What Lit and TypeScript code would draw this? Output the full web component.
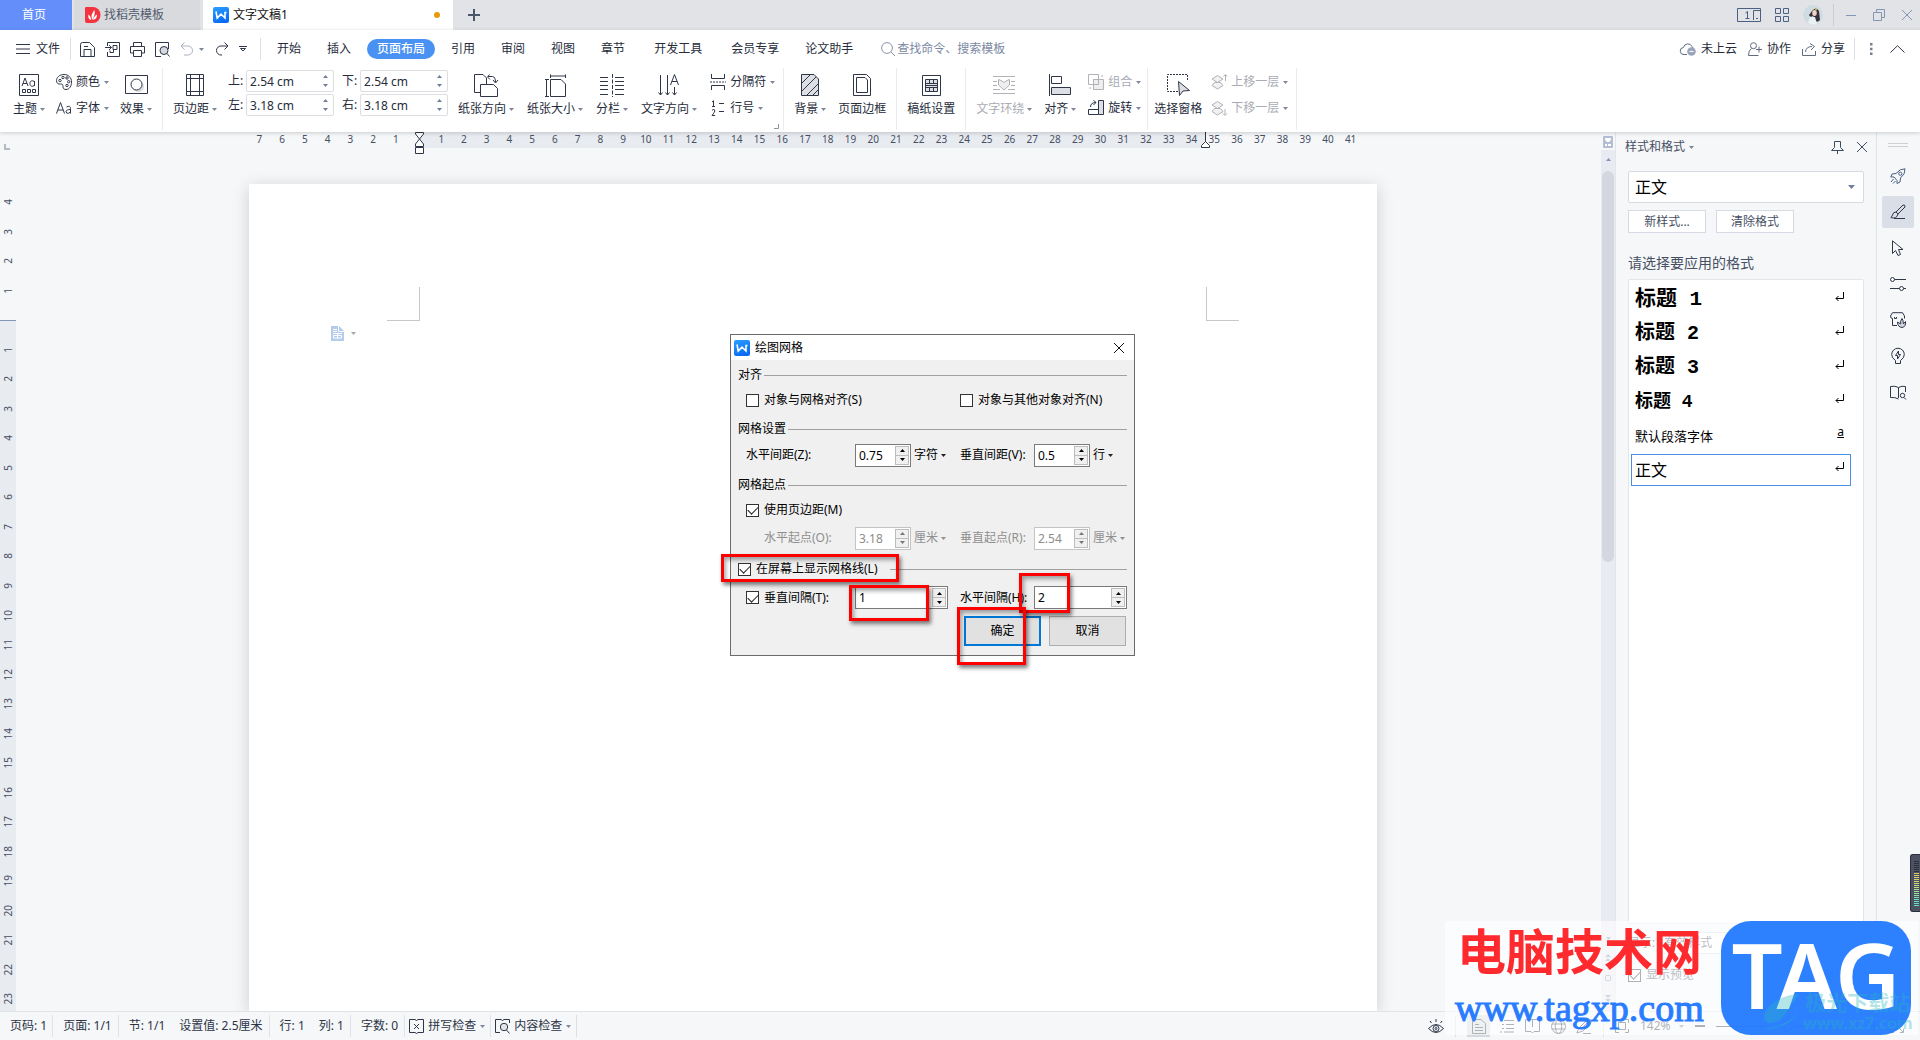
import { LitElement, html, svg, css, nothing } from "lit";
import { customElement } from "lit/decorators.js";
import { classMap } from "lit/directives/class-map.js";

/** Wraps vector content in an <svg> drawn at one unit per pixel. */
const ic = (w: number, h: number, body: unknown, cls = "") =>
  html`<svg class="ic ${cls}" width=${w} height=${h} viewBox="0 0 ${w} ${h}" aria-hidden="true">${body}</svg>`;

const caret = () => ic(5, 3, svg`<path d="M0 0H5L2.5 3Z" fill="currentColor" stroke="none"/>`, "caret");
const up = () => ic(5, 3, svg`<path d="M0 3H5L2.5 0Z" fill="currentColor" stroke="none"/>`);
const down = () => ic(5, 3, svg`<path d="M0 0H5L2.5 3Z" fill="currentColor" stroke="none"/>`);

const wps = () => ic(16, 16, svg`
  <defs><linearGradient id="wg" x1="0" y1="0" x2="0.4" y2="1"><stop offset="0" stop-color="#2ba0ff"/><stop offset="1" stop-color="#0a6cf5"/></linearGradient></defs>
  <rect width="16" height="16" rx="2" fill="url(#wg)" stroke="none"/>
  <path d="M3 4.500L4.200 11L8 7.200L12 11V5.500H13.500" fill="none" stroke="#fff" stroke-width="1.600"/>`);

const icons = {
  docer: ic(15, 16, svg`<path d="M1 0H8A7.500 8 0 0 1 8 16H2Q0 16 0 14V1Q0 0 1 0Z" fill="#f5333f" stroke="none"/><path d="M5.500 13Q2.500 11 3.500 7.500Q6 9 6 13ZM7 13Q5.500 7 9.500 3Q10.500 8 7 13ZM8 13Q8.500 9.500 12 7.500Q12 12 8 13Z" fill="#fff" stroke="none"/>`),
  plus: ic(12, 12, svg`<path d="M6 0V12M0 6H12" stroke="#4b566c" stroke-width="2"/>`),
  layout: ic(24, 14, svg`<path d="M15 .5H.5V13.500H15M15 .5H23.500V13.500H15M16.500 12V2.500H23M19 10.500H21" stroke="#4a5f82"/><path d="M10.500 11V3.500L8.500 5M8.500 10.500H12.500" stroke="#4a5f82"/>`),
  grid: ic(14, 14, svg`<path d="M.5.5H5.500V5.500H.5ZM8.500.5H13.500V5.500H8.500ZM.5 8.500H5.500V13.500H.5ZM8.500 8.500H13.500V13.500H8.500Z" stroke="#4a5f82"/>`),
  avatar: ic(20, 20, svg`<g stroke="none"><circle cx="10" cy="10" r="10" fill="#cfdde2"/><path d="M9 6Q13 1 16 6L17 15Q13 19 12 14L10 11Q7 13 6 10Z" fill="#35303c"/><ellipse cx="11.500" cy="8" rx="2.300" ry="3" fill="#f1d3c5"/><path d="M7 12L12 12L14 19Q9 21 5 18Z" fill="#e9f1f4"/><circle cx="13" cy="4.500" r="1" fill="#e6b34a"/></g>`),
  min: ic(10, 12, svg`<path d="M0 6.500H10" stroke="#8494b3"/>`),
  restore: ic(12, 12, svg`<path d="M.5 3.500H8.500V11.500H.5ZM3.500 3V.5H11.500V8.500H9" stroke="#8494b3"/>`),
  close: ic(10, 10, svg`<path d="M0 0L10 10M10 0L0 10" stroke="#8494b3"/>`),
  menu: ic(14, 10, svg`<path d="M0 .5H14M0 5H14M0 9.500H14"/>`),
  save: ic(15, 15, svg`<path d="M.5 2.500Q.5.5 2.500.5H9.500L14.500 5.500V14.500H.5ZM4 14V7.500H11V14M4 4.500H8"/>`),
  pdf: ic(15, 15, svg`<path d="M2.500 4V.5H14.500V14.500H2.500V10M0 5.500H6.500M4 3L6.500 5.500L4 8M8 3.500H12V7.500H8ZM8.500 7.500V10.500H5V8.500"/>`),
  print: ic(15, 15, svg`<path d="M3.500 4V.5H11.500V4M3.500 11H.5V4.500H14.500V11H11.500M3.500 8.500H11.500V14.500H3.500Z"/>`),
  preview: ic(15, 15, svg`<path d="M6 14.500H.5V.5H13.500V7"/><circle cx="9" cy="8.500" r="4" fill="#d6d9e2"/><path d="M12 11.500L14.500 14.500"/>`),
  undo: ic(13, 14, svg`<path d="M4.500.5L1 4L4.500 7.500M1 4H8A4.500 4.500 0 0 1 8 13H4" stroke="#aab0bd"/>`),
  redo: ic(13, 14, svg`<path d="M8.500.5L12 4L8.500 7.500M12 4H5A4.500 4.500 0 0 0 5 13H6"/>`),
  more: ic(8, 6, svg`<path d="M0 .5H8M1.500 2.500L4 5L6.500 2.500Z"/>`),
  search: ic(14, 14, svg`<circle cx="6" cy="6" r="5.400" stroke="#8793ac"/><path d="M10 10L14 14" stroke="#8793ac"/>`),
  cloud: ic(16, 14, svg`<path d="M7 12.500H4A3.500 3.500 0 0 1 3.500 5.500A4.500 4.500 0 0 1 12 4.500L13 6" stroke="#606b80"/><circle cx="11.500" cy="9.500" r="4.300" fill="#9aa5ba" stroke="none"/><path d="M9.500 9.500H13.500" stroke="#fff"/>`),
  person: ic(14, 14, svg`<circle cx="5.500" cy="3.700" r="3" stroke="#606b80"/><path d="M3.500 6.500Q.5 8 .5 13.500H10.500M8 7.500H14M11 4.500V10.500" stroke="#606b80"/>`),
  share: ic(14, 13, svg`<path d="M.5 6V12.500H13.500V8M3.500 9Q4 3.500 10 3.500M8 .5L12.500 3.500L9 7" stroke="#606b80"/>`),
  dots: ic(3, 12, svg`<path d="M0 0H2.500V2.500H0ZM0 4.700H2.500V7.200H0ZM0 9.400H2.500V11.900H0Z" fill="#777f90" stroke="none"/>`),
  chevron: ic(15, 8, svg`<path d="M.5 7.500L7.500.7L14.500 7.500"/>`),
  theme: ic(20, 22, svg`<path d="M.5.5H19.500V21.500H.5ZM3.500 15.500H6.500V18.500H3.500ZM8.500 15.500H11.500V18.500H8.500ZM13.500 15.500H16.500V18.500H13.500Z"/><path d="M3 12L6 4L9 12M4 9.500H8M15.500 7V12M15.500 9.500A2.300 2.300 0 1 0 11 9.500A2.300 2.300 0 1 0 15.500 9.500"/>`),
  palette: ic(16, 16, svg`<path d="M8 .5C3.500.5.5 3.500.5 6.500C.5 9 2 10.500 4.500 10C6.500 9.600 7 11 7 12.500C7 14.500 8 15.500 10 15.500C13.500 15.500 15.500 12 15.500 8C15.500 3.500 12.500.5 8 .5Z"/><circle cx="4" cy="6.500" r="1.200"/><circle cx="7" cy="3.500" r="1.200"/><circle cx="11" cy="4" r="1.200"/><circle cx="12.700" cy="7.700" r="1.200"/><circle cx="11" cy="11.500" r="1.200"/>`),
  aa: ic(16, 14, svg`<path d="M.5 12.500L4.500 1.500L8.500 12.500M2 9H7M10.500 6Q14.500 4 14.500 7.500V12.500M14.500 8.500Q10 8.500 10 10.700Q10.500 12.800 12.500 12.300L14.500 11"/>`),
  effect: ic(23, 20, svg`<path d="M.5.5H22.500V18.500H.5Z"/><circle cx="13.500" cy="11.500" r="5.500" fill="#dcdde2" stroke="none"/><circle cx="11.500" cy="9.500" r="5.500" fill="#fff"/>`),
  margins: ic(18, 22, svg`<path d="M.5.5H17.500V21.500H.5ZM4.500.5V21.500M13.500.5V21.500M.5 4.500H17.500M.5 17.500H17.500"/>`),
  orient: ic(24, 23, svg`<path d="M6 18.500H.5V.5H9L12.500 4V10M6.500 22.500V10.500H19.500L23.500 14.500V22.500ZM15.500.5L13.500 3L16 5.500M14 2.500H18.500Q21.500 3 21.500 8M19 6L21.500 9L24 6"/>`),
  size: ic(21, 23, svg`<path d="M5.500.5V4M20.500.5V4M5.500 2H20.500M0 5.500H4M0 22.500H4M1.500 5.500V22.500M5.500 5.500H16L20.500 10V22.500H5.500Z"/>`),
  columns: ic(24, 23, svg`<path d="M0 3.500H8M0 7.500H8M0 11.500H8M0 15.500H8M0 20.500H8M15 3.500H24M15 7.500H24M15 11.500H24M15 15.500H24M15 20.500H24"/><path d="M12.500 0V23" stroke-dasharray="4 1.500"/>`),
  textdir: ic(22, 23, svg`<path d="M2.500 1V21M9.500 1V21M16.500 13V21M.5 18.500L2.500 21L4.500 18.500M7.500 18.500L9.500 21L11.500 18.500M14.500 18.500L16.500 21L18.500 18.500M12.500 11L16.500.5L20.500 11M14 7.500H19"/>`),
  breaks: ic(16, 16, svg`<path d="M1.500 0V4.500H14.500V0M1.500 16V11.500H14.500V16"/><path d="M0 8H16" stroke-dasharray="2 1"/>`),
  lines: ic(16, 16, svg`<path d="M2 2L3.500.8V6.500M2 6.500H5M2 10.200Q4.800 8.500 4.800 11Q4.500 12.500 2 15.500H5.200M9 3.500H14M9 11.500H14"/>`),
  backdrop: ic(18, 22, svg`<path d="M.5.5H13L17.500 5V21.500H.5Z" fill="#dddfe5"/><path d="M1 9L9 1M1 17L15 3M6 21L17 10M12 21L17 16"/>`),
  border: ic(18, 22, svg`<path d="M.5.5H13.500L17.500 4.500V21.500H.5ZM3.500 3.500H12L14.500 6V18.500H3.500Z"/>`),
  manuscript: ic(19, 21, svg`<path d="M.5.5H18.500V20.500H.5Z"/><path d="M3.500 4.500H15.500V16.500H3.500Z" fill="#dddfe5"/><path d="M3.500 8.500H15.500M3.500 12.500H15.500M7.500 4.500V8.500M11.500 4.500V8.500M7.500 12.500V16.500M11.500 12.500V16.500M3.500 10.500H15.500"/>`),
  wrap: ic(22, 18, svg`<path d="M0 .5H22M0 17.500H22M0 5.500H4M0 9.500H4M0 13.500H7M18 5.500H22M18 9.500H22M15 13.500H22" stroke="#b0b2b8"/><path d="M11 14L5.500 9V3.500L8 4.500L11 6.500L14 4.500L16.500 3.500V9Z" fill="#eee" stroke="#b0b2b8"/>`),
  align: ic(22, 22, svg`<path d="M.5 0V22M2.500 2.500H12.500V9.500H2.500Z"/><path d="M2.500 13.500H21.500V20.500H2.500Z" fill="#dddfe5"/>`),
  group: ic(16, 16, svg`<path d="M.5.5H10.500V10.500H.5Z" stroke="#b0b2b8"/><path d="M5.500 5.500H15.500V15.500H5.500Z" fill="#eee" stroke="#b0b2b8"/><path d="M5.500 5.500H10.500V10.500H5.500ZM13 2H15M1 14H3" stroke="#b0b2b8"/>`),
  rotate: ic(16, 16, svg`<path d="M10.500.5H15.500V14.500H10.500Z" fill="#dddfe5"/><path d="M10.500 9.500H.5V14.500H10.500M2.500 7Q2.500 2.500 8 2.500M5.500.3L8 2.500L5.500 5"/>`),
  pane: ic(23, 22, svg`<path d="M11 17.500H.5V.5H20.500V7" stroke-dasharray="2 1"/><path d="M11.500 7.500L22.500 16.500L16 17L12.500 21.500Z" fill="#dddfe5"/>`),
  raise: ic(16, 16, svg`<path d="M6.500 1.500L12 5L6.500 8.500L1 5ZM6.500 15L12 11.500L9.500 8.500L6.500 8.500L3.500 8.500L1 11.500Z" fill="#f1f1f2" stroke="#b0b2b8"/><path d="M14.500 7V1M12.500 2.500L14.500.5L16 2.500" stroke="#b0b2b8"/>`),
  lower: ic(16, 16, svg`<path d="M6.500 15L12 11.500L9.500 8.500L3.500 8.500L1 11.500ZM6.500 1.500L12 5L6.500 8.500L1 5Z" fill="#f1f1f2" stroke="#b0b2b8"/><path d="M14 9V15M12 13.500L14 15.500L16 13.500" stroke="#b0b2b8"/>`),
  launcher: ic(5, 5, svg`<path d="M4.500 0V4.500H0" stroke="#8b93a5"/>`),
  doc: ic(13, 15, svg`<path d="M0 0H8L13 5V15H0Z" fill="#b4cbec" stroke="none"/><path d="M7.500 0V5.500H13M2 3.500H6M2 5.500H6M2 7.500H11M2.500 9.500H10.500V12H2.500ZM6.500 8V13" stroke="#fff"/>`),
  pin: ic(13, 13, svg`<path d="M3.500.5H9.500V6.500L12.500 9.500H.5L3.500 6.500ZM6.500 9.500V13" stroke="#3d4a63"/>`),
  x10: ic(10, 10, svg`<path d="M0 0L10 10M10 0L0 10" stroke="#3d4a63"/>`),
  ret: ic(9, 9, svg`<path d="M8.500 0V6.500H1M3.500 4L1 6.500L3.500 9" stroke="#000"/>`),
  rocket: ic(16, 16, svg`<path d="M15 .8Q10 .5 6 5.500L2 6L.8 9L4 9L7 12.500L7 15.500L10 14L10.500 10Q15.500 6 15 .8ZM3.500 11L1 14M5.500 13L3 15.500"/><circle cx="10.300" cy="5.700" r="1.600"/>`, "slate"),
  brush: ic(16, 16, svg`<path d="M6 8L13 1Q15.500.5 15 3L8 10ZM6 8Q3 8 2.500 11Q2 13 .8 13.500Q6.500 15.500 8 10M4 14.500H15"/>`),
  cursor: ic(14, 16, svg`<path d="M1.500.8V13.500L4.500 10.500L7 15.500L9.500 14.500L7.500 9.500H12Z"/>`),
  sliders: ic(16, 14, svg`<circle cx="2.500" cy="2.500" r="2"/><circle cx="11.500" cy="11.500" r="2"/><path d="M4.500 2.500H16M0 11.500H9.500M13.500 11.500H16"/>`),
  template: ic(16, 16, svg`<path d="M7 13.500H2.500V6.500Q.5 6.500.5 4L2.500.7H12.500L14.500 4V6.500M4.500 5V6.500H6.500V5"/><path d="M7.500 10Q7.500 15 12 15.500Q16 15 15.500 9.500L13.300 12Q13.500 8 12 6.500Q10 9 10.700 12Z" fill="#d6d9e2"/>`),
  bulb: ic(14, 16, svg`<path d="M4.500 12.500Q.7 10 .7 6.500A6.300 6.300 0 0 1 13.300 6.500Q13.300 10 9.500 12.500V15.500H4.500ZM7.500 3L4.500 7.500H6.500L6.500 11L9.500 6.500H7.500Z"/>`),
  book: ic(16, 15, svg`<path d="M8.500 13V2.500Q5 .5.5 1.500V12.500Q5 12 8.500 14M8.500 2.500Q12 .5 15.500 1.500V7"/><circle cx="12.500" cy="10.500" r="2.200"/><path d="M14 12.500L16 14.500"/>`),
  spell: ic(15, 15, svg`<path d="M6 .5H.5V13.500H6L7.500 14.500L9 13.500H14.500V.5H9L7.500 1.500ZM5 5L10 10M10 5L5 10"/>`),
  content: ic(15, 15, svg`<path d="M6 .5H.5V13.500H5M9 .5H14.500V4M6 .5L7.500 1.500L9 .5"/><circle cx="9" cy="8" r="3.700" fill="#e3e5ea"/><path d="M11.500 11L14.500 14.500"/>`),
  eye: ic(16, 15, svg`<path d="M.5 9.500Q8 1.500 15.500 9.500Q8 17.500.5 9.500ZM2 2L3.500 4M8 0V3M14 2L12.500 4"/><circle cx="8" cy="9.500" r="3"/><circle cx="8" cy="9.500" r="1"/>`),
  vpage: ic(14, 15, svg`<path d="M.5.5H9L13.500 4.500V14.500H.5ZM3 5.500H7M3 8.500H11M3 11.500H11"/>`),
  voutline: ic(14, 14, svg`<path d="M0 1.500H2M4 1.500H14M2 5.500H4M6 5.500H14M2 9.500H4M6 9.500H14M0 13H2M4 13H14"/>`),
  vread: ic(15, 14, svg`<path d="M.5.5H14.500V12.500H9L7.500 14L6 12.500H.5ZM7.500 1V8"/>`),
  vweb: ic(15, 15, svg`<circle cx="7.500" cy="7.500" r="7"/><ellipse cx="7.500" cy="7.500" rx="3.200" ry="7"/><path d="M1 5H14M1 10H14"/>`),
  vwrite: ic(17, 15, svg`<path d="M.8 14L3 9L11 1L15 1L15 4L7 12ZM7 14.500H15M5 10L11 4"/>`),
  fit: ic(14, 14, svg`<path d="M4 .5H.5V4M10 .5H13.500V4M.5 10V13.500H4M13.500 10V13.500H10M3.500 3.500H10.500V10.500H3.500Z"/>`),
  expand: ic(14, 14, svg`<path d="M4 .5H.5V4M10 .5H13.500V4M.5 10V13.500H4M13.500 10V13.500H10M1 1L5 5M13 1L9 5M1 13L5 9M13 13L9 9"/>`),
  ellipsis: ic(16, 6, svg`<circle cx="2.500" cy="3" r="1.500"/><circle cx="8" cy="3" r="1.500"/><circle cx="13.500" cy="3" r="1.500"/>`),
  smart: ic(14, 13, svg`<path d="M3.500.5H10.500L13.500 6.500L10.500 12.500H3.500L.5 6.500Z" stroke="#f59a23" fill="#fde3bd"/><path d="M9 4H6Q4.500 5.500 7 6.500Q9.500 7.500 8 9H5" stroke="#f59a23"/>`),
};

const base = css`
  * { box-sizing: border-box; }
  button, input, select { font: inherit; color: inherit; margin: 0; }
  button { border: 0; background: none; padding: 0; display: inline-flex; align-items: center; justify-content: center; white-space: nowrap; }
  a { color: inherit; text-decoration: none; }
  .ic { display: block; flex: none; fill: none; stroke: #2f3648; stroke-width: 1; overflow: visible; }
  .caret { color: #7d879c; }
`;

/** Number box with up and down steppers. */
@customElement("spin-box")
class SpinBox extends LitElement {
  static properties = { value: {}, label: {}, off: { type: Boolean }, look: { reflect: true } };
  declare value: string;
  declare label: string;
  declare off: boolean;
  declare look: string;
  static styles = [base, css`
    :host { display: flex; height: 22px; background: #fff; border: 1px solid #dcdee3; border-radius: 2px; color: #262c3b; }
    .text { flex: 1; min-width: 0; width: 0; border: 0; padding: 1px 0 0 3px; background: none; outline: 0; height: 20px; line-height: 19px; }
    .steps { display: flex; flex-direction: column; justify-content: center; width: 16px; gap: 1px; color: #6d7f9c; }
    .step { flex: 0 0 8px; }
    :host([look="win"]) { height: 23px; border-color: #7a7a7a; border-radius: 0; color: #000; }
    :host([look="win"]) .steps { width: 14px; margin: 1px; gap: 0; border: 1px solid #bdbdbd; background: #f0f0f0; color: #000; }
    :host([look="win"]) .step { flex: 1; }
    :host([look="win"]) .step + .step { border-top: 1px solid #bdbdbd; }
    :host([off]) { border-color: #c4c4c4 !important; color: #8c8c8c !important; }
    :host([off]) .steps { color: #777 !important; }
    .text:disabled { color: #8c8c8c; }
  `];
  render() {
    return html`<input class="text" aria-label=${this.label} .value=${this.value} ?disabled=${this.off} />
      <span class="steps">
        <button class="step" aria-label="增加" ?disabled=${this.off}>${up()}</button>
        <button class="step" aria-label="减少" ?disabled=${this.off}>${down()}</button>
      </span>`;
  }
}

const spin = (label: string, value: string, look = "", off = false) =>
  html`<spin-box class="spin" label=${label} value=${value} look=${look} ?off=${off}></spin-box>`;

/** Drawing grid settings window. */
@customElement("grid-dialog")
class GridDialog extends LitElement {
  static styles = [base, css`
    :host { display: block; background: #f0f0f0; border: 1px solid #6b6b6b; color: #000; }
    .title { display: flex; align-items: center; height: 25px; background: #fff; padding: 0 10px 0 3px; gap: 5px; }
    .title .name { flex: 1; }
    .title .ic path { stroke: #111; }
    .title .logo .ic path { stroke: #fff; }
    .body { padding: 5px 7px 8px; }
    .head { display: flex; align-items: center; gap: 2px; height: 20px; }
    .head::after { content: ""; flex: 1; border-top: 1px solid #a0a0a0; }
    .head.wide { gap: 12px; margin-top: 8px; }
    .second { margin-top: 4px; }
    .checks { display: grid; grid-template-columns: 214px 1fr; height: 30px; align-items: center; padding-left: 8px; }
    .fields { display: grid; grid-template-columns: 109px 105px 74px 1fr; height: 32px; align-items: center; padding-left: 8px; }
    .fields.low { height: 26px; color: #8f8f8f; }
    .fields.last { height: 37px; }
    .indent { padding-left: 18px; }
    .check { display: flex; align-items: center; gap: 5px; white-space: nowrap; }
    .box { appearance: none; width: 13px; height: 13px; border: 1px solid #333; background: #fff; margin: 0; display: grid; place-items: center; }
    .box:checked::after { content: ""; width: 9px; height: 5px; border: solid #222; border-width: 0 0 1px 1px; transform: translateY(-1px) rotate(-45deg); }
    .cell { display: flex; align-items: center; gap: 3px; white-space: nowrap; }
    .cell .spin { width: 56px; }
    .cell.full .spin { width: 93px; }
    .unit { gap: 3px; }
    .caret { color: #222; }
    .low .caret { color: #8f8f8f; }
    .foot { display: flex; justify-content: flex-end; gap: 8px; padding: 0 1px 0 0; }
    .push { width: 77px; height: 30px; border: 1px solid #adadad; background: #e1e1e1; }
    .push.main { border: 2px solid #0078d7; }
  `];
  private check(text: string, on = false) {
    return html`<label class="check"><input class="box" type="checkbox" .checked=${on} />${text}</label>`;
  }
  private pair(a: string[], b: string[], off = false) {
    return html`<div class=${classMap({ fields: true, low: off })}>
      <span class=${off ? "indent" : ""}>${a[0]}</span>
      <span class="cell">${spin(a[0], a[1], "win", off)}<button class="unit" ?disabled=${off}>${a[2]}${caret()}</button></span>
      <span>${b[0]}</span>
      <span class="cell">${spin(b[0], b[1], "win", off)}<button class="unit" ?disabled=${off}>${b[2]}${caret()}</button></span>
    </div>`;
  }
  render() {
    return html`
      <header class="title"><span class="logo">${wps()}</span><span class="name">绘图网格</span><button aria-label="关闭">${icons.x10}</button></header>
      <div class="body">
        <div class="head">对齐</div>
        <div class="checks">${this.check("对象与网格对齐(S)")}${this.check("对象与其他对象对齐(N)")}</div>
        <div class="head second">网格设置</div>
        ${this.pair(["水平间距(Z):", "0.75", "字符"], ["垂直间距(V):", "0.5", "行"])}
        <div class="head second">网格起点</div>
        <div class="checks">${this.check("使用页边距(M)", true)}</div>
        ${this.pair(["水平起点(O):", "3.18", "厘米"], ["垂直起点(R):", "2.54", "厘米"], true)}
        <div class="head wide">${this.check("在屏幕上显示网格线(L)", true)}</div>
        <div class="fields last">
          ${this.check("垂直间隔(T):", true)}<span class="cell full">${spin("垂直间隔", "1", "win")}</span>
          <span>水平间隔(H):</span><span class="cell full">${spin("水平间隔", "2", "win")}</span>
        </div>
        <div class="foot"><button class="push main">确定</button><button class="push">取消</button></div>
      </div>`;
  }
}

/** Style task pane with the tool rail beside it. */
@customElement("style-pane")
class StylePane extends LitElement {
  static styles = [base, css`
    :host { display: flex; width: 305px; color: #474f63; background: #f5f7f9; border-left: 1px solid #e3e5ea; }
    .pane { flex: 1; display: flex; flex-direction: column; padding: 0 12px; min-height: 0; border-right: 1px solid #e0e3e8; }
    .top { display: flex; align-items: center; height: 30px; margin-left: -3px; gap: 13px; padding-right: 9px; margin-right: -12px; }
    .top .name { margin-right: auto; gap: 4px; }
    .current { position: relative; margin-top: 9px; display: flex; color: #000; }
    .drop { appearance: none; flex: 1; height: 32px; border: 1px solid #d7dae2; border-radius: 2px; background: #fff; padding: 0 6px; font-size: 16px; outline: 0; }
    .arrow { position: absolute; right: 9px; top: 50%; transform: translateY(-50%); color: #6d7f9c; pointer-events: none; }
    .btns { display: flex; gap: 10px; margin-top: 7px; }
    .btn { width: 78px; height: 23px; border: 1px solid #d7dae2; background: #fff; }
    .hint { font-size: 14px; line-height: 20px; margin: 20px 0 6px; }
    .list { flex: 1; margin: 0; padding: 3px 12px 0 2px; list-style: none; background: #fff; border: 1px solid #e3e5ea; border-radius: 2px; color: #000; }
    .item { display: flex; width: 100%; justify-content: space-between; height: 34px; padding: 0 6px 0 3px; border: 1px solid transparent; line-height: 32px; }
    .item .ic, .item u { margin-bottom: 8px; }
    .item.on { height: 32px; border-color: #4a90e2; margin-top: 1px; }
    .h1, .h2, .h4 { font-family: "Liberation Mono", "Noto Sans CJK SC", monospace; font-weight: 700; font-size: 21px; }
    .h2 { font-size: 20px; }
    .h4 { font-size: 18px; }
    .d { font-size: 13px; }
    .n { font-size: 16px; }
    .show { display: flex; align-items: center; margin-top: 8px; height: 22px; position: relative; }
    .show .drop { height: 22px; font-size: 12px; margin-left: 4px; padding: 0 4px; }
    .last { display: flex; justify-content: space-between; align-items: center; height: 20px; margin: 11px 0 26px; padding-right: 5px; }
    .last label, .last button { display: flex; gap: 5px; align-items: center; }
    .box { appearance: none; width: 13px; height: 13px; border: 1px solid #333; background: #fff; display: grid; place-items: center; }
    .box::after { content: ""; width: 9px; height: 5px; border: solid #222; border-width: 0 0 1px 1px; transform: translateY(-1px) rotate(-45deg); }
    .smart { color: #3c7ff0; }
    .rail { width: 43px; display: flex; flex-direction: column; align-items: center; gap: 4px; padding: 0 2px 14px 0; }
    .grip { width: 20px; height: 4px; border: solid #cdd0d5; border-width: 1px 0; margin: 11px 0 9px; }
    .tool { width: 32px; height: 32px; border-radius: 2px; }
    .tool.on { background: #dadfe7; }
    .slate { stroke: #4a5f82; }
    .end { margin-top: auto; }
  `];
  render() {
    const items: [string, string][] = [["标题 1", "h1"], ["标题 2", "h2"], ["标题 3", "h2"], ["标题 4", "h4"], ["默认段落字体", "d"], ["正文", "n"]];
    const tools: [string, unknown][] = [["推荐", icons.rocket], ["样式和格式", icons.brush], ["选择", icons.cursor], ["属性", icons.sliders], ["素材", icons.template], ["帮助", icons.bulb], ["查找", icons.book]];
    return html`
      <section class="pane">
        <div class="top"><button class="name">样式和格式${caret()}</button><button aria-label="固定">${icons.pin}</button><button aria-label="关闭">${icons.x10}</button></div>
        <div class="current"><select class="drop" aria-label="当前样式"><option>正文</option></select><span class="arrow">${ic(7, 4, svg`<path d="M0 0H7L3.500 4Z" fill="currentColor" stroke="none"/>`)}</span></div>
        <div class="btns"><button class="btn">新样式...</button><button class="btn">清除格式</button></div>
        <div class="hint">请选择要应用的格式</div>
        <ul class="list">${items.map(([t, c]) => html`<li><button class=${classMap({ item: true, on: c === "n" })}><span class=${c}>${t}</span>${c === "d" ? html`<u>a</u>` : icons.ret}</button></li>`)}</ul>
        <div class="show"><label for="shown">显示:</label><select id="shown" class="drop"><option>有效样式</option></select><span class="arrow">${caret()}</span></div>
        <div class="last"><label><input class="box" type="checkbox" checked />显示预览</label><button class="smart">${icons.smart}智能排版</button></div>
      </section>
      <nav class="rail" aria-label="工具">
        <span class="grip"></span>
        ${tools.map(([n, i], k) => html`<button aria-label=${n} class=${classMap({ tool: true, on: k === 1 })}>${i}</button>`)}
        <button class="end" aria-label="更多">${icons.ellipsis}</button>
      </nav>`;
  }
}

@customElement("app-root")
class AppRoot extends LitElement {
  static styles = [base, css`
    :host { display: block; font: 12px/18px "Noto Sans", "Noto Sans CJK SC", sans-serif; color: #262c3b; }
    .app { position: relative; display: flex; flex-direction: column; height: 100vh; overflow: hidden; background: #f5f7f9; }
    .tabs { display: flex; height: 30px; background: #e1e3e7; align-items: stretch; }
    .home { width: 72px; background: #648ffb; color: #fff; margin-right: 2px; padding-right: 4px; }
    .tab { justify-content: flex-start; gap: 4px; padding: 0 11px; width: 126px; background: #d8dadd; color: #525b6e; margin-right: 3px; }
    .tab.on { width: 250px; background: #fff; color: #111; padding: 0 13px 0 10px; }
    .dirty { width: 6px; height: 6px; border-radius: 3px; background: #e69a0b; margin-left: auto; }
    .add { width: 36px; }
    .sys { margin-left: auto; display: flex; align-items: center; padding-right: 8px; gap: 14px; }
    .sep { width: 1px; height: 22px; background: #dcdfe4; flex: none; }
    .sys .sep { background: #c9ccd3; margin: 0 -2px 0 -4px; }
    .sys .win { margin-left: 3px; }
    .header { background: #fff; box-shadow: 0 1px 4px rgba(0, 0, 0, .18); position: relative; z-index: 2; }
    .menu { display: flex; align-items: center; height: 38px; padding: 0 15px 0 16px; }
    .file { gap: 6px; margin-right: 10px; }
    .quick { display: flex; align-items: center; gap: 10px; padding: 0 13px 0 9px; }
    .quick .drop { margin: 0 2px 0 -4px; }
    .nav { display: flex; padding-left: 3px; }
    .link { padding: 0 10px; margin: 0 3px; height: 20px; line-height: 20px; border-radius: 10px; }
    .link.addon { margin: 0 3px 0 6px; }
    .link.on { background: #4991f2; color: #fff; font-weight: 500; }
    .find { display: flex; align-items: center; gap: 2px; margin-left: 15px; color: #7c88a2; }
    .query { border: 0; background: none; outline: 0; padding: 0; width: 120px; }
    .query::placeholder { color: #7c88a2; opacity: 1; }
    .right { margin-left: auto; display: flex; align-items: center; gap: 11px; }
    .right button { gap: 5px; }
    .right .sep { margin: 0 4px 0 -2px; }
    .right .dots { margin-right: 6px; }
    .ribbon { display: flex; height: 64px; padding-left: 3px; }
    .group { display: flex; align-items: flex-start; padding: 0 10px; gap: 12px; border-right: 1px solid #eaebee; height: 62px; position: relative; }
    .group.first { gap: 11px; }
    .group.tight { padding: 0 8px 0 6px; gap: 9px; }
    .group.shapes { padding-right: 6px; }
    .group.setup { gap: 13px; padding-right: 8px; }
    .big { flex-direction: column; padding-top: 6px; gap: 4px; }
    .big .pic { height: 22px; display: flex; align-items: center; }
    .big .cap, .small { display: flex; align-items: center; gap: 3px; }
    .pair { display: flex; flex-direction: column; align-items: flex-start; padding-top: 1px; }
    .small { height: 26px; gap: 4px; }
    .off { color: #a9acb4; }
    .mgrid { display: grid; grid-template-columns: 18px 88px 26px 88px; row-gap: 2px; padding-top: 2px; margin: 0 -3px 0 -2px; align-items: center; }
    .mgrid .r { padding-left: 8px; }
    .launch { position: absolute; right: 4px; bottom: 1px; }
    .main { flex: 1; display: flex; min-height: 0; }
    .work { flex: 1; min-width: 0; position: relative; display: flex; flex-direction: column; overflow: hidden; }
    .num { font-size: 10px; line-height: 14px; text-align: center; color: #474f63; }
    .hruler { height: 16px; display: flex; justify-content: center; padding-left: 9px; }
    .hcells { position: relative; display: grid; grid-template-columns: repeat(49, 1fr); width: 1114px; }
    .hcells .num { position: relative; }
    .tint { position: absolute; left: 171px; width: 787px; top: 0; height: 16px; background: #e8ebf0; }
    .mark { position: absolute; top: 0; left: 167px; z-index: 1; }
    .mark.end { left: 953px; }
    .corner { position: absolute; left: 4px; top: 12px; width: 6px; height: 6px; border: solid #b5b9c4; border-width: 0 0 2px 2px; }
    .canvas { flex: 1; display: flex; min-height: 0; }
    .vruler { width: 16px; display: flex; flex-direction: column; padding-top: 39px; }
    .vcells { flex: none; position: relative; display: grid; grid-template-rows: repeat(28, 1fr); height: 827px; }
    .vcells .num { display: grid; place-items: center; transform: rotate(-90deg); }
    .vtint { position: absolute; left: 0; right: 0; top: 133px; bottom: 0; background: #e8ebf0; border-top: 1px solid #8494b3; }
    .stage { flex: 1; display: flex; justify-content: center; padding: 36px 0 0 9px; }
    .page { width: 1128px; background: #fff; box-shadow: 0 3px 16px rgba(0, 0, 0, .17); padding-top: 103px; }
    .crops { display: flex; justify-content: space-between; padding: 0 138px; }
    .crop { width: 33px; height: 34px; border: solid #c8c8c8; border-width: 0 1px 1px 0; }
    .crop + .crop { border-width: 0 0 1px 1px; }
    .para { margin: 5px 0 0 82px; gap: 7px; }
    .para .caret { color: #a8a8a8; }
    .scroll { width: 14px; display: flex; flex-direction: column; align-items: center; color: #8494b3; }
    .split { height: 18px; padding-top: 4px; }
    .track { flex: 1; width: 14px; background: #e9ebf2; display: flex; flex-direction: column; align-items: center; padding: 8px 0 9px; }
    .thumb { width: 12px; max-height: 391px; flex: 1 0 391px; border-radius: 6px; background: #d4d7e0; margin: 10px 0 auto; }
    .pager { gap: 14px; display: flex; flex-direction: column; align-items: center; }
    .status { display: flex; align-items: center; height: 29px; border-top: 1px solid #e0e3e8; padding-right: 16px; color: #2d3446; }
    .status .cell { padding: 0 6px 0 10px; display: flex; align-items: center; gap: 14px; border-left: 1px solid #dfe2e7; height: 22px; white-space: nowrap; }
    .status .cell:first-child { padding-right: 5px; border-left: 0; }
    .status .cell.btn { padding: 0 5px 0 4px; gap: 4px; }
    .views { margin-left: auto; display: flex; align-items: center; gap: 11px; }
    .view { width: 15px; height: 22px; }
    .view.on { width: 23px; background: #d5d9e0; margin: 0 -2px 0 0; }
    .pct { display: flex; align-items: center; justify-content: space-between; width: 44px; }
    .zoomer { width: 142px; appearance: none; height: 12px; background: linear-gradient(#2f3648, #2f3648) center / 100% 1px no-repeat; }
    .zoomer::-webkit-slider-thumb { appearance: none; width: 12px; height: 12px; border-radius: 6px; border: 1px solid #2f3648; background: #f5f7f9; }
    .dialog { position: absolute; left: 730px; top: 334px; width: 405px; height: 322px; z-index: 3; }
    .red { position: absolute; border: 3px solid #f00; box-shadow: 2px 3px 4px rgba(0, 0, 0, .5), inset 2px 3px 4px rgba(0, 0, 0, .35); z-index: 4; pointer-events: none; }
    .r1 { left: 721px; top: 554px; width: 178px; height: 28px; }
    .r2 { left: 849px; top: 585px; width: 80px; height: 36px; }
    .r3 { left: 1019px; top: 573px; width: 51px; height: 40px; }
    .r4 { left: 957px; top: 607px; width: 69px; height: 58px; }
    .meter { position: absolute; right: 0; top: 854px; width: 10px; height: 58px; background: #4d5262; border: 1px solid #2c303c; border-right: 0; border-radius: 3px 0 0 3px; z-index: 3; padding: 6px 1px 0 3px; }
    .bars { display: block; height: 46px; background: linear-gradient(#2c303c 24%, #e2c15c 25%, #d3dd77 50%, #5fe0c4 90%); mask: repeating-linear-gradient(#000 0 1px, transparent 1px 2px); }
    .brand { position: absolute; right: 2px; bottom: 5px; height: 114px; background: rgba(255, 255, 255, .62); display: flex; z-index: 5; padding: 0 7px 0 10px; }
    .words { width: 266px; display: flex; flex-direction: column; white-space: nowrap; }
    .cn { font: 700 49px/56px "Noto Sans CJK SC", sans-serif; color: #ff2a2e; padding-left: 2px; }
    .url { font: 38px/62px "Liberation Serif", serif; color: #2a7cff; -webkit-text-stroke: 1px #2a7cff; }
    .tag { position: relative; width: 190px; border-radius: 30px; background: rgba(34, 122, 255, .95); color: #fff; font: 600 90px/107px "Noto Sans", sans-serif; text-align: center; }
    .ghost { position: absolute; left: 40px; top: 68px; display: flex; align-items: center; gap: 2px; color: rgba(40, 180, 190, .35); }
    .ghost .g1 { font: 700 21px/24px "Noto Sans CJK SC", sans-serif; display: block; white-space: nowrap; }
    .ghost .g2 { font: 700 16px/20px "Noto Sans", sans-serif; display: block; text-align: left; }
  `];

  private big(pic: unknown, text: string, drop = true, off = false) {
    return html`<button class=${classMap({ big: true, off })}><span class="pic">${pic}</span><span class="cap">${text}${drop ? caret() : nothing}</span></button>`;
  }
  private small(pic: unknown, text: string, off = false) {
    return html`<button class=${classMap({ small: true, off })}>${pic}${text}${caret()}</button>`;
  }

  private ribbon() {
    return html`<div class="ribbon">
      <div class="group first">${this.big(icons.theme, "主题")}<div class="pair">${this.small(icons.palette, "颜色")}${this.small(icons.aa, "字体")}</div>${this.big(icons.effect, "效果")}</div>
      <div class="group setup">
        ${this.big(icons.margins, "页边距")}
        <div class="mgrid">
          <span>上:</span>${spin("上", "2.54 cm")}<span class="r">下:</span>${spin("下", "2.54 cm")}
          <span>左:</span>${spin("左", "3.18 cm")}<span class="r">右:</span>${spin("右", "3.18 cm")}
        </div>
        ${this.big(icons.orient, "纸张方向")}${this.big(icons.size, "纸张大小")}${this.big(icons.columns, "分栏")}${this.big(icons.textdir, "文字方向")}
        <div class="pair">${this.small(icons.breaks, "分隔符")}${this.small(icons.lines, "行号")}</div>
        <button class="launch" aria-label="页面设置">${icons.launcher}</button>
      </div>
      <div class="group">${this.big(icons.backdrop, "背景")}${this.big(icons.border, "页面边框", false)}</div>
      <div class="group">${this.big(icons.manuscript, "稿纸设置", false)}</div>
      <div class="group shapes">${this.big(icons.wrap, "文字环绕", true, true)}${this.big(icons.align, "对齐")}<div class="pair">${this.small(icons.group, "组合", true)}${this.small(icons.rotate, "旋转")}</div></div>
      <div class="group tight">${this.big(icons.pane, "选择窗格", false)}<div class="pair">${this.small(icons.raise, "上移一层", true)}${this.small(icons.lower, "下移一层", true)}</div></div>
    </div>`;
  }

  private header() {
    const quick: [string, unknown][] = [["保存", icons.save], ["输出为PDF", icons.pdf], ["打印", icons.print], ["打印预览", icons.preview], ["撤销", icons.undo]];
    const tabs = ["开始", "插入", "页面布局", "引用", "审阅", "视图", "章节", "开发工具", "会员专享", "论文助手"];
    return html`
      <div class="tabs">
        <button class="home">首页</button>
        <button class="tab">${icons.docer}找稻壳模板</button>
        <button class="tab on">${wps()}文字文稿1<span class="dirty"></span></button>
        <button class="add" aria-label="新建">${icons.plus}</button>
        <div class="sys">
          <button aria-label="布局">${icons.layout}</button><button aria-label="应用">${icons.grid}</button><button aria-label="账户">${icons.avatar}</button>
          <span class="sep"></span><button aria-label="最小化">${icons.min}</button><button class="win" aria-label="还原">${icons.restore}</button><button class="win" aria-label="关闭">${icons.close}</button>
        </div>
      </div>
      <div class="header">
        <div class="menu">
          <button class="file">${icons.menu}文件</button><span class="sep"></span>
          <div class="quick">${quick.map(([n, i]) => html`<button aria-label=${n}>${i}</button>`)}<button class="drop" aria-label="撤销列表">${caret()}</button><button aria-label="恢复">${icons.redo}</button><button aria-label="更多">${icons.more}</button></div>
          <span class="sep"></span>
          <nav class="nav">${tabs.map((t) => html`<a href="#" class=${classMap({ link: true, on: t === "页面布局", addon: t === "开发工具" || t === "会员专享" })}>${t}</a>`)}</nav>
          <label class="find">${icons.search}<input class="query" aria-label="查找" placeholder="查找命令、搜索模板" /></label>
          <div class="right"><button>${icons.cloud}未上云</button><button>${icons.person}协作</button><button>${icons.share}分享</button><span class="sep"></span><button class="dots" aria-label="更多">${icons.dots}</button><button aria-label="收起">${icons.chevron}</button></div>
        </div>
        ${this.ribbon()}
      </div>`;
  }

  private work() {
    const h = Array.from({ length: 49 }, (_, i) => Math.abs(i - 7));
    const v = Array.from({ length: 28 }, (_, i) => Math.abs(i - 4));
    return html`
      <div class="work">
        <div class="hruler"><div class="hcells"><span class="tint"></span>${h.map((n) => html`<span class="num">${n || ""}</span>`)}
          <span class="mark">${ic(9, 22, svg`<path d="M.5.5H8.500V2L4.500 7L.5 2ZM4.500 7L8.500 12V14.500H.5V12ZM.5 15.500H8.500V21.500H.5Z" fill="#fff"/>`)}</span>
          <span class="mark end">${ic(9, 16, svg`<path d="M4.500 0V10"/><path d="M.5 15.500V13.500L4.500 9.500L8.500 13.500V15.500Z" fill="#fff"/>`)}</span>
        </div></div>
        <span class="corner"></span>
        <div class="canvas">
          <div class="vruler"><div class="vcells"><span class="vtint"></span>${v.map((n) => html`<span class="num">${n || ""}</span>`)}</div></div>
          <div class="stage"><article class="page"><div class="crops"><span class="crop"></span><span class="crop"></span></div><button class="para" aria-label="段落布局">${icons.doc}${caret()}</button></article></div>
        </div>
      </div>
      <div class="scroll">
        <div class="split">${ic(10, 12, svg`<rect width="10" height="12" rx="1" fill="#b4bdd3" stroke="none"/><path d="M2 2H8V4L6 6H4L2 4ZM2 8H4V10H2ZM5 8H8V10H5Z" fill="#fff" stroke="none"/>`)}</div>
        <div class="track">${up()}<span class="thumb"></span>
          <div class="pager">${down()}${ic(6, 7, svg`<path d="M0 3H6L3 0ZM0 7H6L3 4Z" fill="currentColor" stroke="none"/>`)}${ic(6, 6, svg`<rect x=".5" y=".5" width="5" height="5" rx="1" stroke="currentColor"/>`)}${ic(6, 7, svg`<path d="M0 0H6L3 3ZM0 4H6L3 7Z" fill="currentColor" stroke="none"/>`)}</div>
        </div>
      </div>`;
  }

  private status() {
    const views: [string, unknown][] = [["页面视图", icons.vpage], ["大纲", icons.voutline], ["阅读", icons.vread], ["网页", icons.vweb], ["写作", icons.vwrite]];
    return html`<footer class="status">
      <span class="cell">页码: 1</span><span class="cell">页面: 1/1</span><span class="cell">节: 1/1<span>设置值: 2.5厘米</span></span>
      <span class="cell">行: 1<span>列: 1</span></span><span class="cell">字数: 0</span>
      <button class="cell btn">${icons.spell}拼写检查${caret()}</button><button class="cell btn">${icons.content}内容检查${caret()}</button><span class="sep"></span>
      <div class="views">
        <button aria-label="护眼模式">${icons.eye}</button><span class="sep"></span>
        ${views.map(([n, i], k) => html`<button aria-label=${n} class=${classMap({ view: true, on: k === 0 })}>${i}</button>`)}
        <span class="sep"></span><button aria-label="适应">${icons.fit}</button><button class="pct">142%${caret()}</button>
        <button aria-label="缩小">${ic(10, 2, svg`<path d="M0 1H10" stroke-width="2"/>`)}</button>
        <input class="zoomer" type="range" aria-label="缩放" value="50" />
        <button aria-label="放大">${ic(10, 10, svg`<path d="M5 0V10M0 5H10" stroke-width="2"/>`)}</button>
        <button aria-label="全屏">${icons.expand}</button>
      </div>
    </footer>`;
  }

  render() {
    return html`<div class="app">
      ${this.header()}
      <main class="main">${this.work()}<style-pane></style-pane></main>
      ${this.status()}
      <grid-dialog class="dialog" role="dialog" aria-label="绘图网格"></grid-dialog>
      <span class="red r1"></span><span class="red r2"></span><span class="red r3"></span><span class="red r4"></span>
      <div class="meter"><span class="bars"></span></div>
      <div class="brand">
        <div class="words"><span class="cn">电脑技术网</span><span class="url">www.tagxp.com</span></div>
        <div class="tag">TAG<span class="ghost">${ic(40, 40, svg`<path d="M38 3C20 4 4 14 3 26C3 34 14 34 22 26C28 20 28 14 22 16C14 18 10 28 14 30C20 32 26 20 38 3ZM2 37C14 40 34 32 38 20C34 28 20 36 2 37Z" fill="currentColor" stroke="none"/>`)}<span><span class="g1">极光下载站</span><span class="g2">www.xz7.com</span></span></span></div>
      </div>
    </div>`;
  }
}
